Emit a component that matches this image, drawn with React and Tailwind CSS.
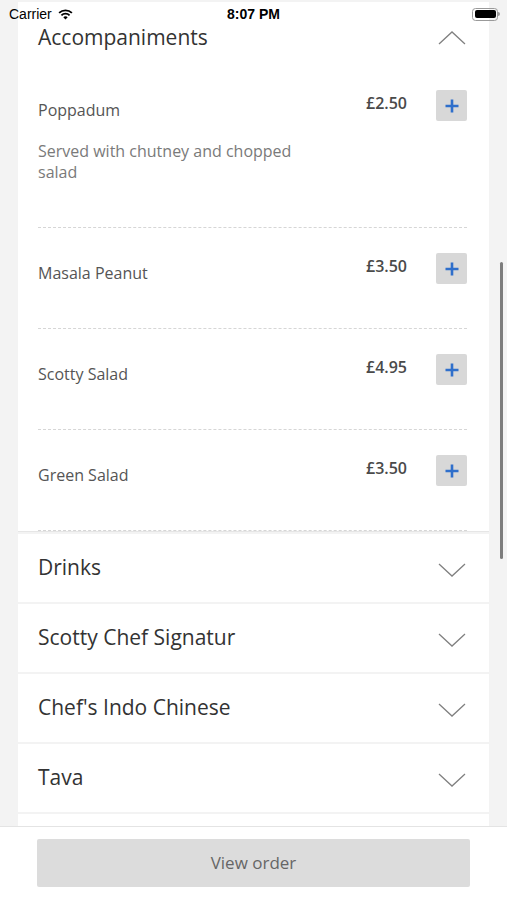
import React from "react";

const Chevron = ({ up }) => (
  <svg width="28" height="16" viewBox="0 0 28 16" fill="none">
    <polyline
      points={up ? "1,14 14,2 27,14" : "1,2 14,14 27,2"}
      stroke="#808080"
      strokeWidth="1.3"
      strokeLinejoin="miter"
    />
  </svg>
);

const PlusBtn = () => (
  <div className="w-[31px] h-[31px] bg-[#d8d8d8] rounded-[2px] flex items-center justify-center shrink-0">
    <svg width="16" height="16" viewBox="0 0 16 16">
      <path d="M8 1.5v13M1.5 8h13" stroke="#2f6fcb" strokeWidth="2.6" />
    </svg>
  </div>
);

const items = [
  { name: "Poppadum", price: "£2.50", desc: "Served with chutney and chopped salad" },
  { name: "Masala Peanut", price: "£3.50" },
  { name: "Scotty Salad", price: "£4.95" },
  { name: "Green Salad", price: "£3.50" },
];

const sections = ["Drinks", "Scotty Chef Signatur", "Chef's Indo Chinese", "Tava", ""];

export default function App() {
  return (
    <div
      className="w-[507px] h-[900px] bg-[#f3f3f3] relative overflow-hidden flex flex-col"
      style={{ fontFamily: '"Open Sans", "Noto Sans", sans-serif' }}
    >
      {/* status bar overlay */}
      <div
        className="absolute top-0 left-0 right-0 h-[28px] flex items-center justify-between px-[9px] z-10 text-[14px] text-black"
        style={{ fontFamily: '"Liberation Sans", Arial, sans-serif' }}
      >
        <div className="flex items-center gap-[5px]">
          <span>Carrier</span>
          <svg width="17" height="12" viewBox="0 0 17 12">
            <path d="M8.5 11.5 L6.3 9.2 A3.2 3.2 0 0 1 10.7 9.2 Z" fill="#000" />
            <path d="M4.4 7.3 A5.9 5.9 0 0 1 12.6 7.3" stroke="#000" strokeWidth="1.8" fill="none" />
            <path d="M2.1 4.9 A9.2 9.2 0 0 1 14.9 4.9" stroke="#000" strokeWidth="1.8" fill="none" />
          </svg>
        </div>
        <span className="absolute left-1/2 -translate-x-1/2 font-bold">8:07 PM</span>
        <div className="flex items-center mr-[-2px]">
          <div className="w-[26px] h-[13px] rounded-[3.5px] border border-[#9a9a9a] p-[1.5px]">
            <div className="w-full h-full bg-black rounded-[2px]" />
          </div>
          <div className="w-[2px] h-[4px] bg-[#9a9a9a] rounded-r-sm" />
        </div>
      </div>

      {/* scrolling content */}
      <div className="flex-1 overflow-hidden pt-[2px] px-[18px] flex flex-col gap-[2px]">
        <div className="bg-white border-b border-[#e6e6e6]">
          <div className="flex items-start justify-between pl-[20px] pr-[23px] pt-[20px] h-[63px]">
            <span className="text-[21px] leading-[30px] text-[#333]">Accompaniments</span>
            <div className="mt-[8px]">
              <Chevron up />
            </div>
          </div>
          <div className="pl-[20px] pr-[22px]">
            {items.map((it) => (
              <div
                key={it.name}
                className="pt-[25px] pb-[44px] border-b border-dashed border-[#d6d6d6]"
              >
                <div className="flex items-start">
                  <div className="flex-1">
                    <div className="mt-[9px] text-[16px] leading-[22px] text-[#555]">{it.name}</div>
                    {it.desc && (
                      <div className="mt-[20px] w-[270px] text-[16px] leading-[21px] text-[#7a7a7a]">
                        {it.desc}
                      </div>
                    )}
                  </div>
                  <div className="h-[31px] flex items-center text-[16px] font-semibold text-[#4a4a4a] mr-[29px] -mt-[3px]">
                    {it.price}
                  </div>
                  <PlusBtn />
                </div>
              </div>
            ))}
          </div>
        </div>

        {sections.map((s, i) => (
          <div
            key={i}
            className="bg-white h-[68px] shrink-0 flex items-center justify-between pl-[20px] pr-[23px]"
          >
            <span className="text-[21px] text-[#333]">{s}</span>
            {s && (
              <div className="mt-[4px]">
                <Chevron />
              </div>
            )}
          </div>
        ))}
      </div>

      {/* scrollbar */}
      <div className="absolute left-[500px] top-[262px] w-[3px] h-[297px] rounded-full bg-[#7d7d7d]" />

      {/* bottom bar */}
      <div className="h-[74px] shrink-0 bg-white border-t border-[#e4e4e4] px-[37px] pt-[12px]">
        <div className="h-[48px] w-[433px] bg-[#dcdcdc] rounded-[2px] flex items-center justify-center text-[17px] text-[#666]">
          View order
        </div>
      </div>
    </div>
  );
}
